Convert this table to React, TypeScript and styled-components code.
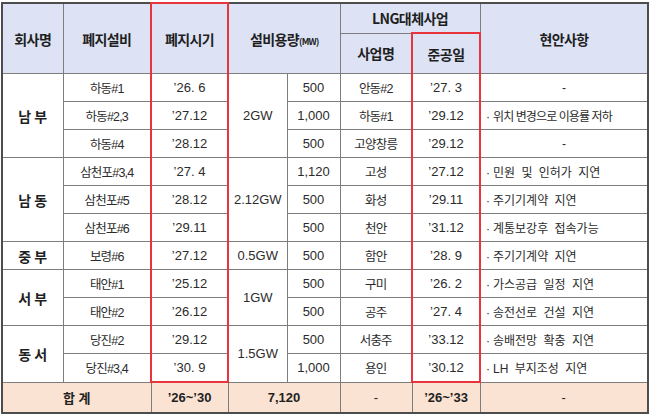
import React from 'react';
import styled, { createGlobalStyle, css } from 'styled-components';

const GlobalStyle = createGlobalStyle`
  html, body {
    margin: 0;
    padding: 0;
    background: #ffffff;
  }
  body {
    font-family: "Liberation Sans", "Noto Sans CJK KR", sans-serif;
    color: #2b2b2b;
  }
`;

const RED = '#e8353b';
const LINE = '#7d7d7d';
const OUTER = '#4d4d4d';

interface PlantRow {
  plant: string;
  retire: string;
  mw: string;
  project: string;
  done: string;
  note?: string;
  tight?: boolean;
}

interface Group {
  company: string;
  gw: string;
  rows: PlantRow[];
}

const groups: Group[] = [
  {
    company: '남 부',
    gw: '2GW',
    rows: [
      { plant: '하동#1', retire: '’26. 6', mw: '500', project: '안동#2', done: '’27. 3' },
      { plant: '하동#2,3', retire: '’27.12', mw: '1,000', project: '하동#1', done: '’29.12', note: '위치 변경으로 이용률 저하', tight: true },
      { plant: '하동#4', retire: '’28.12', mw: '500', project: '고양창릉', done: '’29.12' },
    ],
  },
  {
    company: '남 동',
    gw: '2.12GW',
    rows: [
      { plant: '삼천포#3,4', retire: '’27. 4', mw: '1,120', project: '고성', done: '’27.12', note: '민원 및 인허가 지연' },
      { plant: '삼천포#5', retire: '’28.12', mw: '500', project: '화성', done: '’29.11', note: '주기기계약 지연' },
      { plant: '삼천포#6', retire: '’29.11', mw: '500', project: '천안', done: '’31.12', note: '계통보강후 접속가능' },
    ],
  },
  {
    company: '중 부',
    gw: '0.5GW',
    rows: [
      { plant: '보령#6', retire: '’27.12', mw: '500', project: '함안', done: '’28. 9', note: '주기기계약 지연' },
    ],
  },
  {
    company: '서 부',
    gw: '1GW',
    rows: [
      { plant: '태안#1', retire: '’25.12', mw: '500', project: '구미', done: '’26. 2', note: '가스공급 일정 지연' },
      { plant: '태안#2', retire: '’26.12', mw: '500', project: '공주', done: '’27. 4', note: '송전선로 건설 지연' },
    ],
  },
  {
    company: '동 서',
    gw: '1.5GW',
    rows: [
      { plant: '당진#2', retire: '’29.12', mw: '500', project: '서충주', done: '’33.12', note: '송배전망 확충 지연' },
      { plant: '당진#3,4', retire: '’30. 9', mw: '1,000', project: '용인', done: '’30.12', note: 'LH 부지조성 지연' },
    ],
  },
];

const Page = styled.div`
  padding: 2px 0 0 1px;
`;

const Table = styled.table`
  width: 648px;
  border-collapse: collapse;
  table-layout: fixed;
  border: 2px solid ${OUTER};
`;

interface RedProps {
  $redSides?: boolean;
  $redTop?: boolean;
  $redBottom?: boolean;
}

const redBorders = css<RedProps>`
  ${({ $redSides }) => $redSides && css`
    border-left: 2px solid ${RED};
    border-right: 2px solid ${RED};
  `}
  ${({ $redTop }) => $redTop && css`border-top: 2px solid ${RED};`}
  ${({ $redBottom }) => $redBottom && css`border-bottom: 2px solid ${RED};`}
`;

const HeadCell = styled.th<RedProps & { $h?: number }>`
  height: ${({ $h }) => $h ?? 28}px;
  padding: 0;
  background: #dde3f5;
  border: 1px solid ${LINE};
  font-family: "Noto Sans CJK KR", "Liberation Sans", sans-serif;
  font-size: 14px;
  font-weight: 700;
  letter-spacing: -0.6px;
  color: #1f1f1f;
  text-align: center;
  vertical-align: middle;
  ${redBorders}
`;

const Unit = styled.span`
  font-size: 9px;
  letter-spacing: -0.8px;
`;

type Kind = 'company' | 'name' | 'num' | 'note' | 'noteTight' | 'total';

const Cell = styled.td<RedProps & { $kind?: Kind }>`
  height: 27px;
  padding: 0;
  border: 1px solid ${LINE};
  text-align: center;
  vertical-align: middle;
  font-size: 13px;
  color: #2b2b2b;
  white-space: nowrap;
  overflow: hidden;

  ${({ $kind }) => $kind === 'company' && css`
    font-family: "Noto Sans CJK KR", sans-serif;
    font-size: 14px;
    font-weight: 700;
    color: #1f1f1f;
  `}
  ${({ $kind }) => $kind === 'name' && css`
    font-size: 12.5px;
    letter-spacing: -0.8px;
  `}
  ${({ $kind }) => $kind === 'note' && css`
    text-align: left;
    padding-left: 5px;
    font-size: 12px;
    word-spacing: 3px;
  `}
  ${({ $kind }) => $kind === 'noteTight' && css`
    text-align: left;
    padding-left: 5px;
    font-size: 12px;
    letter-spacing: -0.9px;
  `}
  ${({ $kind }) => $kind === 'total' && css`
    height: 29px;
    background: #fbe3d3;
    font-weight: 700;
    color: #1f1f1f;
  `}
  ${redBorders}
`;

const TotalPlain = styled(Cell)`
  font-weight: 400;
`;

const Bullet = styled.span`
  margin-right: 3px;
  letter-spacing: 0;
`;

const Dash = styled.span`
  display: block;
  text-align: center;
  margin-left: -5px;
`;

const widths = [61, 88, 77, 59, 53, 72, 68, 168];

export default function App() {
  const lastGroup = groups.length - 1;
  return (
    <Page>
      <GlobalStyle />
      <Table>
        <colgroup>
          {widths.map((w, i) => (
            <col key={i} style={{ width: w }} />
          ))}
        </colgroup>
        <thead>
          <tr>
            <HeadCell rowSpan={2}>회사명</HeadCell>
            <HeadCell rowSpan={2}>폐지설비</HeadCell>
            <HeadCell rowSpan={2} $redSides $redTop>폐지시기</HeadCell>
            <HeadCell rowSpan={2} colSpan={2}>
              설비용량<Unit>(MW)</Unit>
            </HeadCell>
            <HeadCell colSpan={2} $h={28}>LNG대체사업</HeadCell>
            <HeadCell rowSpan={2}>현안사항</HeadCell>
          </tr>
          <tr>
            <HeadCell $h={39}>사업명</HeadCell>
            <HeadCell $h={39} $redSides $redTop>준공일</HeadCell>
          </tr>
        </thead>
        <tbody>
          {groups.map((g, gi) =>
            g.rows.map((r, ri) => {
              const last = gi === lastGroup && ri === g.rows.length - 1;
              return (
                <tr key={`${gi}-${ri}`}>
                  {ri === 0 && (
                    <Cell rowSpan={g.rows.length} $kind="company">{g.company}</Cell>
                  )}
                  <Cell $kind="name">{r.plant}</Cell>
                  <Cell $kind="num" $redSides $redBottom={last}>{r.retire}</Cell>
                  {ri === 0 && (
                    <Cell rowSpan={g.rows.length} $kind="num">{g.gw}</Cell>
                  )}
                  <Cell $kind="num">{r.mw}</Cell>
                  <Cell $kind="name">{r.project}</Cell>
                  <Cell $kind="num" $redSides $redBottom={last}>{r.done}</Cell>
                  <Cell $kind={r.tight ? 'noteTight' : 'note'}>
                    {r.note ? (
                      <>
                        <Bullet>·</Bullet>
                        {r.note}
                      </>
                    ) : (
                      <Dash>-</Dash>
                    )}
                  </Cell>
                </tr>
              );
            }),
          )}
          <tr>
            <Cell colSpan={2} $kind="total">합 계</Cell>
            <Cell $kind="total">’26~’30</Cell>
            <Cell colSpan={2} $kind="total">7,120</Cell>
            <TotalPlain $kind="total">-</TotalPlain>
            <Cell $kind="total">’26~’33</Cell>
            <TotalPlain $kind="total">-</TotalPlain>
          </tr>
        </tbody>
      </Table>
    </Page>
  );
}
